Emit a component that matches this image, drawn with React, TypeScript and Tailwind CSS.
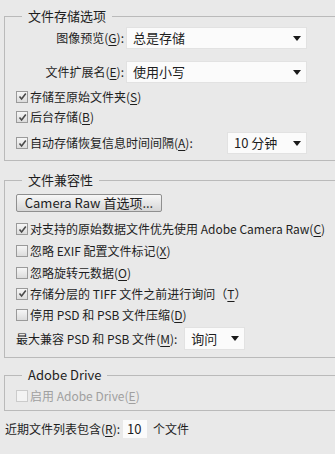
import type { ReactNode } from 'react';

const font = "font-['Noto_Sans_CJK_SC','Noto_Sans',sans-serif]";

function Key({ k }: { k: string }) {
  return <span className="underline underline-offset-2">{k}</span>;
}

function Caret() {
  return (
    <svg width="8" height="5" viewBox="0 0 8 5" className="shrink-0">
      <path d="M0 0 H8 L4 5 Z" fill="#1a1a1a" />
    </svg>
  );
}

function Select({ value, className }: { value: string; className: string }) {
  return (
    <div
      className={`flex items-center justify-between bg-[#fbfbfb] pl-[6px] pr-[5px] text-[13px] shadow-[0_0_0_1px_#e2e2e2] ${className}`}
    >
      <span>{value}</span>
      <Caret />
    </div>
  );
}

function Check({
  checked,
  disabled,
  className = 'h-[21px]',
  children,
}: {
  checked?: boolean;
  disabled?: boolean;
  className?: string;
  children: ReactNode;
}) {
  return (
    <div className={`flex items-center gap-[2px] ${className} ${disabled ? 'text-[#a0a0a0]' : ''}`}>
      <span
        className={`flex h-[12px] w-[12px] shrink-0 items-center justify-center border ${
          disabled
            ? 'border-[#cbcbcb] bg-[#f3f3f3]'
            : 'border-[#9a9a9a] bg-gradient-to-b from-[#f6f6f6] to-[#dcdcdc]'
        }`}
      >
        {checked && (
          <svg width="9" height="9" viewBox="0 0 9 9">
            <path d="M1.5 4.5 L3.6 7 L7.8 1.5" fill="none" stroke="#4a4a4a" strokeWidth="1.6" />
          </svg>
        )}
      </span>
      <span className="whitespace-nowrap">{children}</span>
    </div>
  );
}

function Group({ title, className, children }: { title: string; className: string; children: ReactNode }) {
  return (
    <fieldset className={`ml-[4px] w-[360px] border border-[#bababa] pl-[11px] ${className}`}>
      <legend className="ml-[6px] px-[6px] text-[13px] leading-[18px]">{title}</legend>
      {children}
    </fieldset>
  );
}

export default function App() {
  return (
    <div className={`h-[454px] w-[335px] overflow-hidden bg-[#e9e9e9] pt-[7px] text-[12px] leading-[18px] text-[#1e1e1e] ${font}`}>
      <Group title="文件存储选项" className="pb-[7px]">
        <div className="w-[290px] pt-[3px]">
          <div className="flex h-5 items-center gap-[3px]">
            <span className="w-[108px] text-right">
              图像预览(<Key k="G" />):
            </span>
            <Select value="总是存储" className="h-5 w-[179px]" />
          </div>
          <div className="mt-[14px] flex h-5 items-center gap-[3px]">
            <span className="w-[108px] text-right">
              文件扩展名(<Key k="E" />):
            </span>
            <Select value="使用小写" className="h-5 w-[179px]" />
          </div>
          <div className="mt-[4px]">
            <Check checked className="h-[21px]">
              存储至原始文件夹(<Key k="S" />)
            </Check>
            <Check checked className="h-[20px]">
              后台存储(<Key k="B" />)
            </Check>
          </div>
          <div className="mt-[6px] flex h-5 items-center justify-between">
            <Check checked className="h-5">
              自动存储恢复信息时间间隔(<Key k="A" />):
            </Check>
            <Select value="10 分钟" className="h-5 w-[78px]" />
          </div>
        </div>
      </Group>

      <Group title="文件兼容性" className="mt-[10px] pb-[8px]">
        <div className="pt-[5px]">
          <button className="h-[18px] w-[146px] rounded-[2px] border border-[#8f8f8f] bg-gradient-to-b from-[#f7f7f7] to-[#d6d6d6] text-center text-[13px] leading-[16px]">
            Camera Raw 首选项...
          </button>
        </div>
        <div className="mt-[6px]">
          <Check checked className="h-[22px]">
            对支持的原始数据文件优先使用 Adobe Camera Raw(<Key k="C" />)
          </Check>
          <Check className="h-[22px]">
            忽略 EXIF 配置文件标记(<Key k="X" />)
          </Check>
          <Check className="h-[21px]">
            忽略旋转元数据(<Key k="O" />)
          </Check>
          <Check checked className="h-[21px]">
            存储分层的 TIFF 文件之前进行询问（<Key k="T" />）
          </Check>
          <Check className="h-[21px]">
            停用 PSD 和 PSB 文件压缩(<Key k="D" />)
          </Check>
        </div>
        <div className="mt-[3px] flex h-[21px] items-center gap-[8px]">
          <span>
            最大兼容 PSD 和 PSB 文件(<Key k="M" />):
          </span>
          <Select value="询问" className="h-[21px] w-[59px]" />
        </div>
      </Group>

      <Group title="Adobe Drive" className="mt-[8px] pb-[4px]">
        <div className="pt-[2px]">
          <Check disabled className="h-5">
            启用 Adobe Drive(<Key k="E" />)
          </Check>
        </div>
      </Group>

      <div className="mt-[9px] flex h-[18px] items-center pl-[5px]">
        <span>
          近期文件列表包含(<Key k="R" />):
        </span>
        <span className="ml-[3px] flex h-[18px] w-[24px] items-center bg-[#fbfbfb] pl-[4px] text-[13px]">10</span>
        <span className="ml-[6px]">个文件</span>
      </div>
    </div>
  );
}
